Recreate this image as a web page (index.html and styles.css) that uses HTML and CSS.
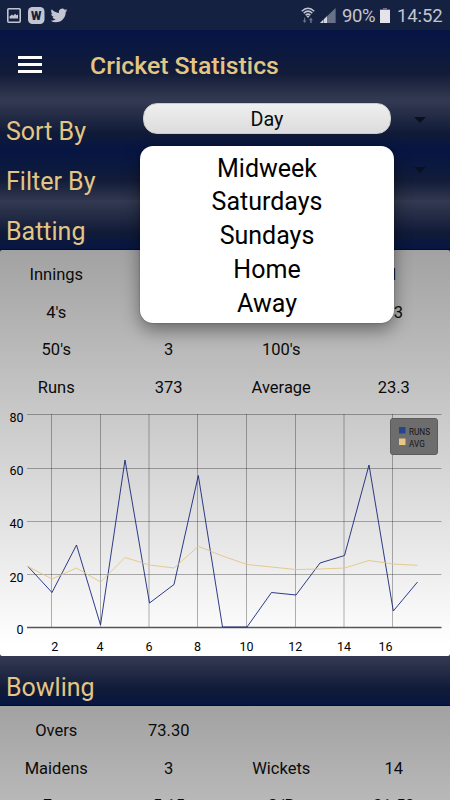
FILE: index.html
```html
<!DOCTYPE html>
<html lang="en">
<head>
<meta charset="utf-8">
<meta name="viewport" content="width=device-width">
<title>Cricket Statistics</title>
<link rel="stylesheet" href="styles.css">
</head>
<body>
<div class="app">
  <div class="status">
    <svg class="notes" viewBox="0 0 75 30">
      <g fill="none" stroke="#c3c5d2">
        <rect x="7.8" y="8.8" width="12.4" height="13.4" rx="1" stroke-width="1.6"/>
      </g>
      <path fill="#c3c5d2" d="M9.5 18.5v-2l2.5-2 1.2 1.2 1.8-1.9 1.5 1.5 1.5-.8v4z"/>
      <rect x="28" y="7" width="16.5" height="17" rx="4.5" fill="#c3c5d2"/>
      <text class="badge" x="36.2" y="20">W</text>
      <path fill="#c3c5d2" transform="translate(50.6 7.1) scale(.7)" d="M23.95 4.57a10 10 0 0 1-2.82.77 4.96 4.96 0 0 0 2.16-2.72c-.95.55-2 .95-3.13 1.18a4.92 4.92 0 0 0-8.38 4.48C7.69 8.1 4.07 6.13 1.64 3.16a4.92 4.92 0 0 0 1.52 6.57 4.9 4.9 0 0 1-2.23-.61v.06a4.92 4.92 0 0 0 3.95 4.83 5 5 0 0 1-2.21.08 4.94 4.94 0 0 0 4.6 3.42A9.87 9.87 0 0 1 0 19.54a13.99 13.99 0 0 0 7.55 2.21c9.05 0 14-7.5 14-13.98 0-.21 0-.42-.02-.63a9.94 9.94 0 0 0 2.42-2.57z"/>
    </svg>
    <div class="system">
      <svg class="signal" viewBox="0 0 38 30">
        <g fill="none" stroke="#c3c5d2" stroke-width="1.5">
          <path d="M1.8 11.2Q8 5.2 14.2 11.2M3.7 13.2Q8 9 12.3 13.2M5.6 15.2Q8 13 10.4 15.2"/>
        </g>
        <path fill="#c3c5d2" d="M6.2 15.8h3.6L8 18z"/>
        <path fill="#68718a" d="M5.2 17.7v2.8h1.3L4.7 23l-2.1-2.5H4v-2.8zM10.2 23v-2.8H8.8l2.1-2.6 2 2.6h-1.2V23z"/>
        <path fill="#68718a" d="M35.6 8v15H20z"/>
        <path fill="#d5d6df" d="M20 23l3-3v3zM23.8 19.2l3.2-3v6.8h-3.2z"/>
      </svg>
      <span class="battery-level">90%</span>
      <svg class="battery" viewBox="0 0 10 15"><path fill="#6b7287" d="M3 0h4v1.2h3v2H0v-2h3z"/><path fill="#e3e3e9" d="M0 2h10v13H0z"/></svg>
      <span class="clock">14:52</span>
    </div>
  </div>

  <header class="appbar">
    <svg class="menu-icon" viewBox="0 0 24 17"><path fill="#fff" d="M0 0h24v3H0zM0 7h24v3H0zM0 14h24v3H0z"/></svg>
    <h1>Cricket Statistics</h1>
  </header>

  <div class="bar">
    <h2>Sort By</h2>
    <div class="select">Day</div>
    <i class="arrow"></i>
    <div class="options">
      <div>Midweek</div><div>Saturdays</div><div>Sundays</div><div>Home</div><div>Away</div>
    </div>
  </div>
  <div class="bar bar-up"><h2>Filter By</h2><i class="arrow"></i></div>
  <div class="bar bar-edge"><h2>Batting</h2></div>

  <section class="panel batting">
    <div class="stats">
      <span>Innings</span><span></span><span></span><span>1</span>
      <span>4's</span><span></span><span></span><span>13</span>
      <span>50's</span><span>3</span><span>100's</span><span></span>
      <span>Runs</span><span>373</span><span>Average</span><span>23.3</span>
    </div>
    <svg class="chart" viewBox="0 405 450 251">
      <path class="grid" d="M27 414.5H441.5M27 468.5H441.5M27 521.5H441.5M27 574.5H441.5M51.5 414V627M100.5 414V627M149 414V627M197.5 414V627M246.5 414V627M295.5 414V627M344 414V627M392.5 414V627"/>
      <path class="axis" d="M27 627.5H441.5"/>
      <polyline class="runs" points="28,566.5 52,592.5 76.5,545 100.5,625 125,460 149.5,603 174,584.5 198.3,475.5 222.5,627 247,627 271.5,592.5 296,595 320,563 344.5,555.5 369,465 393.3,611 417.5,582"/>
      <polyline class="avg" points="28,566.5 52,579 76.5,568 100.5,582 125,557.5 149.5,565 174,568 198.3,546.3 222.5,556 247,564.5 271.5,567 296,569.5 320,569 344.5,568 369,560.5 393.3,564 417.5,565.3"/>
      <g class="ylabels">
        <text x="23.6" y="421.5">80</text><text x="23.6" y="475">60</text><text x="23.6" y="528">40</text><text x="23.6" y="581.5">20</text><text x="23.6" y="634">0</text>
      </g>
      <g class="xlabels">
        <text x="54.8" y="651">2</text><text x="100" y="651">4</text><text x="149" y="651">6</text><text x="197.5" y="651">8</text><text x="246.5" y="651">10</text><text x="295.3" y="651">12</text><text x="344" y="651">14</text><text x="385.5" y="651">16</text>
      </g>
      <rect class="legend" x="390.5" y="418.5" width="47" height="36" rx="2.5"/>
      <rect x="399" y="427" width="6.5" height="6.5" fill="#26458d"/>
      <rect x="399" y="438.5" width="6.5" height="6.5" fill="#e6c783"/>
      <text class="legend-text" x="409" y="435">RUNS</text>
      <text class="legend-text" x="409" y="446.7">AVG</text>
    </svg>
  </section>

  <div class="bar bar-edge"><h2>Bowling</h2></div>
  <section class="panel bowling">
    <div class="stats">
      <span>Overs</span><span>73.30</span><span></span><span></span>
      <span>Maidens</span><span>3</span><span>Wickets</span><span>14</span>
      <span>Eco</span><span>5.15</span><span>S/R</span><span>31.50</span>
    </div>
  </section>
</div>
</body>
</html>
```
FILE: styles.css
```css
* { box-sizing: border-box; }
body { margin: 0; font-family: Roboto, sans-serif; color: #0b0b0b; }
.app { width: 450px; height: 800px; overflow: hidden; background: #061440; }

.status { height: 30px; background: #142140; display: flex; justify-content: space-between; color: #c3c5d2; }
.notes { width: 75px; height: 30px; }
.badge { font-size: 12px; font-weight: 900; text-anchor: middle; fill: #142140; }
.system { display: flex; align-items: center; padding-right: 7px; font-size: 19px; line-height: 30px; }
.signal { width: 38px; height: 30px; margin-right: 4px; }
.battery-level { width: 35px; font-size: 18.5px; letter-spacing: -0.4px; padding-top: 2px; }
.battery { width: 10px; height: 15px; margin: 1px 7px 0 3px; }
.clock { width: 46px; font-size: 18.5px; letter-spacing: -0.1px; padding-top: 2px; white-space: nowrap; }

.appbar { height: 70px; display: flex; align-items: center; padding-left: 18px;
  background: linear-gradient(#061446 0%, #0b183f 30%, #121c39 62%, #30374f 96%, #303856 100%); }
.menu-icon { width: 24px; height: 17px; margin-right: 48px; margin-top: -1px; }
h1 { margin: 1px 0 0; font-size: 24.8px; font-weight: 500; color: #e3c584; white-space: nowrap; }

.bar { position: relative; height: 50px; display: flex; align-items: center;
  background: linear-gradient(#343a52 0%, #252d47 28%, #111b38 65%, #061543 100%); }
.bar-up { background: linear-gradient(#061543 0%, #0b183f 30%, #121c39 60%, #30364d 100%); }
.bar-edge { box-shadow: inset 0 -1px #050b2d; }
h2 { margin: 14px 0 0 6px; width: 137px; font-size: 25px; line-height: 30px; font-weight: 400; color: #e3c584; white-space: nowrap; }
.select { width: 248px; height: 31px; margin-top: -13px; border-radius: 14px; border: 1px solid #ccc;
  background: linear-gradient(#efefef, #dcdcdc); font-size: 19.8px; line-height: 31px; text-align: center; }
.arrow { margin: -11px 24px 0 auto; border: 6px solid transparent; border-top-color: #0b1020; border-bottom: 0; }
.options { position: absolute; z-index: 2; left: 140px; top: 46px; width: 254px; height: 177px; padding-top: 5.5px;
  border-radius: 13px; background: #fff; color: #000; font-size: 25px; line-height: 33.8px; text-align: center;
  box-shadow: 0 7px 18px rgba(0, 0, 0, .42), 0 0 2px rgba(0, 0, 0, .35); }

.panel { padding-top: 6px; }
.batting { height: 406px; background: linear-gradient(#a2a2a2, #fff 97%); border-radius: 2px; }
.bowling { height: 406px; background: linear-gradient(#a2a2a2, #fff 97%); }
.stats { display: grid; grid-template-columns: repeat(4, 112.5px); grid-auto-rows: 37.5px;
  align-items: center; text-align: center; font-size: 16.5px; }
.batting .stats { height: 149px; }
.bowling .stats { grid-template-rows: 37.5px 37px 37px; }

.chart { display: block; width: 450px; height: 251px; }
.grid { stroke: #000; stroke-opacity: .3; stroke-width: 1; }
.axis { stroke: #55565a; stroke-width: 1.6; }
.runs, .avg { fill: none; stroke-width: 0.9; }
.runs { stroke: #17267d; }
.avg { stroke: #e3c584; }
.ylabels { font-size: 12.5px; text-anchor: end; }
.xlabels { font-size: 12.5px; text-anchor: middle; }
.legend { fill: #6d6d6d; stroke: #5c5c5c; }
.legend-text { font-size: 8.2px; fill: #161616; }
```
